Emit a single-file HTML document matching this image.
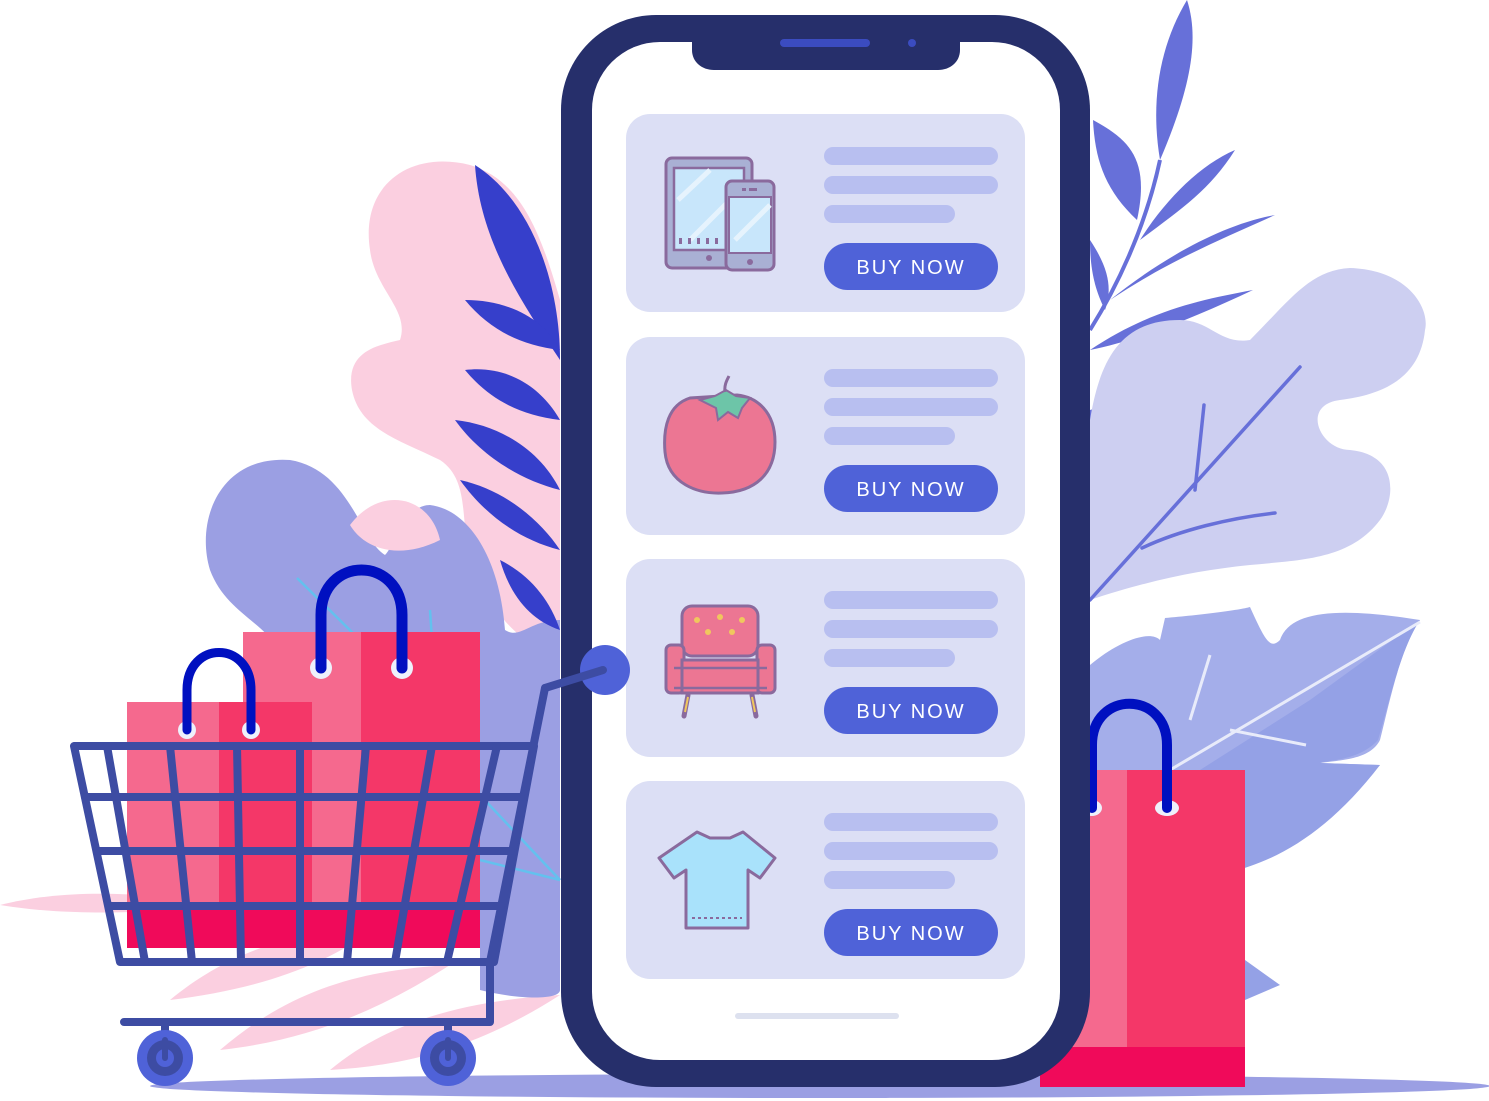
<!DOCTYPE html>
<html><head><meta charset="utf-8"><style>
html,body{margin:0;padding:0;background:#fff;width:1489px;height:1101px;overflow:hidden}
svg{display:block}
.bt{font-family:"Liberation Sans",sans-serif;font-size:20px;fill:#fff;letter-spacing:2px}
</style></head><body>
<svg width="1489" height="1101" viewBox="0 0 1489 1101" xmlns="http://www.w3.org/2000/svg">
<ellipse cx="820" cy="1086" rx="670" ry="12" fill="#9b9fe3"/>
<path d="M470 165 C410 150 360 185 370 250 C375 290 410 310 400 340 C380 345 345 350 352 390 C360 430 400 440 440 460 C470 480 460 520 470 560 C490 620 540 660 560 650 L560 300 C540 230 520 180 470 165Z" fill="#fbcfe0"/>
<path d="M0 905 C60 890 130 890 230 905 C140 915 60 915 0 905Z" fill="#fbcfe0"/>
<path d="M170 1000 C230 950 300 930 380 925 C320 970 250 990 170 1000Z" fill="#fbcfe0"/>
<path d="M220 1050 C290 990 360 970 450 965 C380 1010 310 1040 220 1050Z" fill="#fbcfe0"/>
<path d="M330 1070 C390 1020 470 1000 560 995 C490 1040 420 1065 330 1070Z" fill="#fbcfe0"/>
<path d="M290 460 C220 455 195 520 210 570 C225 610 260 620 280 650 L480 650 L480 990 C520 1000 560 1000 560 990 L560 620 C530 620 520 640 505 630 C500 560 470 510 430 505 C405 505 395 545 385 555 C360 540 350 470 290 460Z" fill="#9b9fe3"/>
<path d="M350 525 C380 485 430 495 440 540 C400 560 365 550 350 525Z" fill="#fbcfe0"/>
<g fill="#363fcb">
<path d="M475 165 C530 200 560 280 560 360 C520 300 480 240 475 165Z"/>
<path d="M465 300 C510 300 545 320 560 350 C520 345 490 330 465 300Z"/>
<path d="M465 370 C505 365 540 385 560 420 C520 415 490 400 465 370Z"/>
<path d="M455 420 C500 425 540 450 560 490 C520 480 480 455 455 420Z"/>
<path d="M460 480 C505 490 540 520 560 550 C520 540 485 515 460 480Z"/>
<path d="M500 560 C530 575 550 600 560 630 C530 620 510 595 500 560Z"/>
</g>
<g fill="#6770d9">
<path d="M1187 0 C1200 40 1190 90 1160 160 C1150 100 1160 45 1187 0Z"/>
<path d="M1093 120 C1130 140 1150 160 1137 220 C1105 190 1095 160 1093 120Z"/>
<path d="M1140 240 C1180 210 1210 190 1235 150 C1200 165 1165 200 1140 240Z"/>
<path d="M1110 300 C1170 260 1220 240 1275 215 C1220 225 1160 260 1110 300Z"/>
<path d="M1090 350 C1150 310 1200 300 1253 290 C1200 315 1140 340 1090 350Z"/>
<path d="M1090 240 C1110 270 1112 290 1105 310 C1095 290 1090 270 1090 240Z"/>
<path d="M1090 410 L1160 390 L1120 450 L1090 460Z"/>
<path d="M1160 160 C1145 230 1115 290 1090 330" stroke="#6770d9" stroke-width="4" fill="none"/>
</g>
<path d="M1090 420 C1100 360 1120 320 1180 320 C1210 320 1220 345 1250 340 C1290 300 1310 270 1350 268 C1410 270 1430 310 1425 330 C1420 380 1380 395 1340 400 C1300 405 1320 450 1350 450 C1400 455 1395 500 1380 520 C1350 560 1300 560 1250 565 C1200 570 1150 580 1090 600Z" fill="#cdcff1"/>
<g stroke="#6770d9" stroke-width="3.5" fill="none" stroke-linecap="round">
<path d="M1090 600 L1300 367"/><path d="M1195 490 L1204 405"/><path d="M1142 548 C1180 530 1230 518 1275 513"/>
</g>
<path d="M1090 665 C1120 640 1150 630 1160 640 L1165 618 C1200 615 1240 610 1250 607 C1265 640 1270 650 1280 640 C1290 610 1340 607 1420 620 C1400 650 1390 700 1380 740 C1370 760 1340 760 1320 763 L1380 765 C1330 820 1300 840 1250 850 L1180 855 L1090 850Z" fill="#a4aeea"/>
<path d="M1200 770 L1310 700 L1420 620 C1400 650 1390 700 1378 740 C1360 760 1330 760 1320 763 L1380 765 C1330 830 1280 860 1230 872 L1200 872Z" fill="#94a1e6"/>
<path d="M1245 960 L1280 985 L1245 1000Z" fill="#94a1e6"/>
<g stroke="#e8ebfa" stroke-width="3" fill="none"><path d="M1170 770 L1420 622"/><path d="M1190 720 L1210 655"/><path d="M1230 730 L1306 745"/></g>
<rect x="1040" y="770" width="205" height="317" fill="#f43768"/>
<rect x="1040" y="770" width="87" height="317" fill="#f5698e"/>
<rect x="1040" y="1047" width="205" height="40" fill="#f00a5a"/>
<ellipse cx="1167" cy="808" rx="12" ry="8" fill="#eef0fb"/>
<ellipse cx="1092" cy="808" rx="10" ry="8" fill="#eef0fb"/>
<path d="M1092 808 L1092 745 C1092 690 1167 690 1167 745 L1167 808" stroke="#0010c0" stroke-width="10" fill="none" stroke-linecap="round"/>
<rect x="561" y="15" width="529" height="1072" rx="95" fill="#262f6b"/>
<rect x="592" y="42" width="468" height="1018" rx="68" fill="#fff"/>
<path d="M692 15 L960 15 L960 50 C960 62 950 70 938 70 L714 70 C702 70 692 62 692 50Z" fill="#262f6b"/>
<rect x="780" y="39" width="90" height="8" rx="4" fill="#3b4cc0"/>
<circle cx="912" cy="43" r="4" fill="#3b4cc0"/>
<rect x="735" y="1013" width="164" height="6" rx="3" fill="#dde1ef"/>
<g>
<rect x="626" y="114" width="399" height="198" rx="24" fill="#dcdff5"/>
<rect x="824" y="147" width="174" height="18" rx="9" fill="#b8bff0"/>
<rect x="824" y="176" width="174" height="18" rx="9" fill="#b8bff0"/>
<rect x="824" y="205" width="131" height="18" rx="9" fill="#b8bff0"/>
<rect x="824" y="243" width="174" height="47" rx="23.5" fill="#4f62d8"/>
<text class="bt" x="911" y="274" text-anchor="middle">BUY NOW</text>
<rect x="626" y="337" width="399" height="198" rx="24" fill="#dcdff5"/>
<rect x="824" y="369" width="174" height="18" rx="9" fill="#b8bff0"/>
<rect x="824" y="398" width="174" height="18" rx="9" fill="#b8bff0"/>
<rect x="824" y="427" width="131" height="18" rx="9" fill="#b8bff0"/>
<rect x="824" y="465" width="174" height="47" rx="23.5" fill="#4f62d8"/>
<text class="bt" x="911" y="496" text-anchor="middle">BUY NOW</text>
<rect x="626" y="559" width="399" height="198" rx="24" fill="#dcdff5"/>
<rect x="824" y="591" width="174" height="18" rx="9" fill="#b8bff0"/>
<rect x="824" y="620" width="174" height="18" rx="9" fill="#b8bff0"/>
<rect x="824" y="649" width="131" height="18" rx="9" fill="#b8bff0"/>
<rect x="824" y="687" width="174" height="47" rx="23.5" fill="#4f62d8"/>
<text class="bt" x="911" y="718" text-anchor="middle">BUY NOW</text>
<rect x="626" y="781" width="399" height="198" rx="24" fill="#dcdff5"/>
<rect x="824" y="813" width="174" height="18" rx="9" fill="#b8bff0"/>
<rect x="824" y="842" width="174" height="18" rx="9" fill="#b8bff0"/>
<rect x="824" y="871" width="131" height="18" rx="9" fill="#b8bff0"/>
<rect x="824" y="909" width="174" height="47" rx="23.5" fill="#4f62d8"/>
<text class="bt" x="911" y="940" text-anchor="middle">BUY NOW</text>
</g>
<rect x="666" y="158" width="86" height="110" rx="6" fill="#a9b0d4" stroke="#8a6a9d" stroke-width="3"/>
<rect x="674" y="168" width="70" height="82" fill="#c8e6fb" stroke="#8a6a9d" stroke-width="2.5"/>
<path d="M678 200 L710 170 M690 240 L740 190" stroke="#e6f3fd" stroke-width="5"/>
<g fill="#8a6a9d"><rect x="679" y="238" width="3" height="6"/><rect x="688" y="238" width="3" height="6"/><rect x="697" y="238" width="3" height="6"/><rect x="706" y="238" width="3" height="6"/><rect x="715" y="238" width="3" height="6"/></g>
<circle cx="709" cy="258" r="3" fill="#8a6a9d"/>
<rect x="726" y="181" width="48" height="89" rx="6" fill="#a9b0d4" stroke="#8a6a9d" stroke-width="3"/>
<rect x="729" y="197" width="42" height="56" fill="#c8e6fb" stroke="#8a6a9d" stroke-width="2"/>
<path d="M735 240 L770 205" stroke="#e6f3fd" stroke-width="5"/>
<circle cx="750" cy="262" r="3" fill="#8a6a9d"/>
<rect x="742" y="188" width="4" height="3" fill="#8a6a9d"/><rect x="749" y="188" width="8" height="3" fill="#8a6a9d"/>
<path d="M690 398 C668 405 663 428 665 452 C668 484 698 494 722 493 C755 492 775 474 775 442 C775 412 757 397 737 395 Z" fill="#ec7693" stroke="#8a6a9d" stroke-width="3"/>
<path d="M700 400 L715 396 L726 390 L736 396 L750 398 L742 408 L738 418 L728 412 L718 420 L716 408 Z" fill="#6dc5a8" stroke="#8a6a9d" stroke-width="2"/>
<path d="M725 392 C724 385 727 380 729 376" stroke="#8a6a9d" stroke-width="3" fill="none"/>
<rect x="682" y="606" width="76" height="50" rx="10" fill="#ec7693" stroke="#8a6a9d" stroke-width="3"/>
<rect x="666" y="645" width="18" height="48" rx="5" fill="#ec7693" stroke="#8a6a9d" stroke-width="3"/>
<rect x="757" y="645" width="18" height="48" rx="5" fill="#ec7693" stroke="#8a6a9d" stroke-width="3"/>
<rect x="682" y="660" width="76" height="33" fill="#ec7693" stroke="#8a6a9d" stroke-width="3"/>
<path d="M674 668 L767 668 M674 688 L767 688" stroke="#8a6a9d" stroke-width="2.5"/>
<g fill="#f0c75e"><circle cx="697" cy="620" r="3"/><circle cx="720" cy="617" r="3"/><circle cx="742" cy="620" r="3"/><circle cx="708" cy="632" r="3"/><circle cx="732" cy="632" r="3"/></g>
<path d="M688 695 L684 716 M752 695 L756 716" stroke="#8a6a9d" stroke-width="5" stroke-linecap="round"/>
<path d="M688 697 L685 712 M752 697 L755 712" stroke="#f0c75e" stroke-width="2"/>
<path d="M697 832 L710 838 L730 838 L743 832 L775 858 L760 878 L748 870 L748 928 L686 928 L686 870 L674 878 L659 858 Z" fill="#a9e2fb" stroke="#8a6a9d" stroke-width="3" stroke-linejoin="round"/>
<path d="M692 918 L742 918" stroke="#8a6a9d" stroke-width="2" stroke-dasharray="3 3"/>
<g stroke="#63c1ee" stroke-width="2.5"><path d="M297 578 L360 640"/><path d="M430 610 L432 640"/><path d="M480 795 L560 880"/><path d="M480 860 L560 880"/></g>
<rect x="243" y="632" width="237" height="303" fill="#f43768"/>
<rect x="243" y="632" width="118" height="303" fill="#f5698e"/>
<rect x="127" y="702" width="185" height="233" fill="#f43768"/>
<rect x="127" y="702" width="92" height="233" fill="#f5698e"/>
<rect x="127" y="905" width="353" height="43" fill="#f00a5a"/>
<circle cx="321" cy="668" r="11" fill="#eef0fb"/><circle cx="402" cy="668" r="11" fill="#eef0fb"/>
<path d="M321 668 L321 615 C321 555 402 555 402 615 L402 668" stroke="#0010c0" stroke-width="11" fill="none" stroke-linecap="round"/>
<circle cx="187" cy="730" r="9" fill="#eef0fb"/><circle cx="251" cy="730" r="9" fill="#eef0fb"/>
<path d="M187 730 L187 690 C187 640 251 640 251 690 L251 730" stroke="#0010c0" stroke-width="9" fill="none" stroke-linecap="round"/>
<g stroke="#3d4ca3" stroke-width="8" fill="none" stroke-linecap="round" stroke-linejoin="round">
<path d="M74 746 L534 746 L494 962 L120 962 Z"/>
<path d="M545 688 L490 962 L490 1022 L124 1022"/>
<path d="M85 797 L521 797 M97 851 L511 851 M109 906 L501 906"/>
<path d="M107 746 L145 962 M170 746 L192 962 M237 746 L241 962 M300 746 L300 962 M366 746 L347 962 M432 746 L395 962 M497 746 L447 962"/>
<path d="M165 1022 L165 1050 M448 1022 L448 1050"/>
</g>
<circle cx="605" cy="670" r="25" fill="#4f62d8"/>
<path d="M545 688 L603 670" stroke="#3d4ca3" stroke-width="8" stroke-linecap="round"/>
<circle cx="165" cy="1058" r="28" fill="#4f62d8"/><circle cx="165" cy="1058" r="18" fill="#3d4ca3"/><circle cx="165" cy="1058" r="9" fill="#4f62d8"/>
<circle cx="448" cy="1058" r="28" fill="#4f62d8"/><circle cx="448" cy="1058" r="18" fill="#3d4ca3"/><circle cx="448" cy="1058" r="9" fill="#4f62d8"/>
<path d="M165 1040 L165 1058 M448 1040 L448 1058" stroke="#3d4ca3" stroke-width="6" stroke-linecap="round"/>
</svg>
</body></html>
